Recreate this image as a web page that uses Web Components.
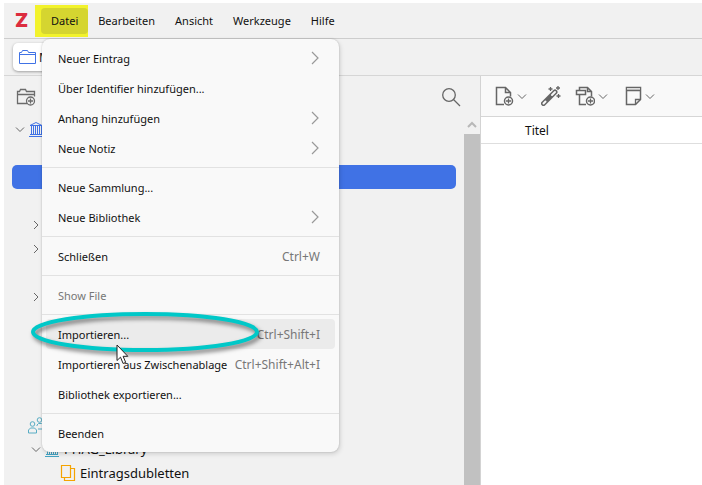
<!DOCTYPE html>
<html lang="de">
<head>
<meta charset="utf-8">
<title>Zotero</title>
<style>
  body {
    margin: 0;
    background: #fff;
    color: #111;
    font-family: "Noto Sans", "Open Sans", sans-serif;
    font-size: 11px;
  }
</style>
</head>
<body>

<app-window>
  <menu-bar slot="menubar">
    <menu-entry label="Datei" open marked>
      <popup-menu>
        <menu-row label="Neuer Eintrag" submenu></menu-row>
        <menu-row label="Über Identifier hinzufügen..."></menu-row>
        <menu-row label="Anhang hinzufügen" submenu></menu-row>
        <menu-row label="Neue Notiz" submenu></menu-row>
        <hr>
        <menu-row label="Neue Sammlung..."></menu-row>
        <menu-row label="Neue Bibliothek" submenu></menu-row>
        <hr>
        <menu-row label="Schließen" keys="Ctrl+W"></menu-row>
        <hr>
        <menu-row label="Show File" disabled></menu-row>
        <hr>
        <menu-row label="Importieren..." keys="Ctrl+Shift+I" active marked></menu-row>
        <menu-row label="Importieren aus Zwischenablage" keys="Ctrl+Shift+Alt+I"></menu-row>
        <menu-row label="Bibliothek exportieren..."></menu-row>
        <hr>
        <menu-row label="Beenden"></menu-row>
      </popup-menu>
    </menu-entry>
    <menu-entry label="Bearbeiten"></menu-entry>
    <menu-entry label="Ansicht"></menu-entry>
    <menu-entry label="Werkzeuge"></menu-entry>
    <menu-entry label="Hilfe"></menu-entry>
  </menu-bar>

  <tab-strip slot="tabs">M</tab-strip>

  <collection-pane slot="sidebar">
    <tree-row icon="library" twisty="down"></tree-row>
    <tree-row></tree-row>
    <tree-row selected></tree-row>
    <tree-row></tree-row>
    <tree-row level="1" twisty="right"></tree-row>
    <tree-row level="1" twisty="right"></tree-row>
    <tree-row></tree-row>
    <tree-row level="1" twisty="right"></tree-row>
    <tree-row></tree-row>
    <tree-row></tree-row>
    <tree-row></tree-row>
    <tree-row></tree-row>
    <tree-row icon="groups" spaced></tree-row>
    <tree-row level="1" icon="group-library" twisty="down">PHAG_Library</tree-row>
    <tree-row level="2" icon="duplicates">Eintragsdubletten</tree-row>
  </collection-pane>

  <items-pane slot="items"></items-pane>
</app-window>

<script>
// ===== Icons =====

const ICONS = {
  folder: [17, 16, `<path d="M.5 14.500V3.500h2l1-2h5l1 2h7v11zM.5 5.500h16" stroke="#4072e5"/>`],
  'folder-add': [20, 19, `<path d="M11 16.500H1.500V4.500h2l1-2h5l1 2h8v5M1.500 7.500h17" stroke="#6b6b6b" stroke-width="1.300"/>
    <circle cx="14.500" cy="14" r="4" stroke="#6b6b6b" stroke-width="1.300"/><path d="M12 14h5M14.500 11.500v5" stroke="#6b6b6b" stroke-width="1.300"/>`],
  library: [16, 16, `<path d="M2 4.500 8 1.500l6 3zM3.500 5v8M5.500 5v8M7.500 5v8M9.500 5v8M11.500 5v8M13.500 5v8M2 13.500h12M1 15.500h14" stroke="#4072e5"/>`],
  'group-library': [16, 16, `<path d="M2 4.500 8 1.500l6 3zM3.500 5v8M5.500 5v8M7.500 5v8M9.500 5v8M11.500 5v8M13.500 5v8M2 13.500h12M1 15.500h14" stroke="#45a5c4"/>`],
  groups: [16, 17, `<g stroke="#59adc4"><circle cx="4.500" cy="7" r="2.300"/><path d="M.5 16v-3l2-2h4l2 2v3z"/>
    <circle cx="11.500" cy="3" r="2.300"/><path d="M9 9V8l1.500-1.500h3L15.500 8v4H10"/></g>`],
  duplicates: [16, 16, `<path d="M1.500.5h9v12h-9zM11 3.500h3.500v12h-10V13" stroke="#f5a300" stroke-width="1.200"/>`],
  search: [20, 20, `<circle cx="8" cy="8" r="6.300" stroke="#666" stroke-width="1.300"/><path d="M12.500 12.500 19 19" stroke="#666" stroke-width="1.300"/>`],
  'twisty-down': [10, 10, `<path d="M1 3.500 5 7.500l4-4" stroke="#666"/>`],
  'twisty-right': [10, 10, `<path d="M3 1l4 4-4 4" stroke="#666"/>`],
  submenu: [9, 14, `<path d="M1 1l6 6-6 6" stroke="#999" stroke-width="1.200"/>`],
  up: [10, 8, `<path d="M1 6l4-4 4 4" stroke="#b8b8b8" stroke-width="2"/>`],
  'item-add': [20, 20, `<path d="M10 18.500H2.500v-17h9l5 5v4M11.500 1.500v5h5" stroke="#666" stroke-width="1.500"/>
    <circle cx="14.500" cy="15" r="4" stroke="#666" stroke-width="1.500"/><path d="M12 15h5M14.500 12.500v5" stroke="#666" stroke-width="1.300"/>`],
  wand: [20, 20, `<path d="M2.500 17.500 14 6" stroke="#666" stroke-width="5" stroke-linecap="round"/>
    <path d="M2.500 17.500l2-2M11 9l3-3" stroke="#f9f9f9" stroke-width="2" stroke-linecap="round"/>
    <path d="M9.500 1v4M7.500 3h4M17 0v4M15 2h4M17.500 8v4M15.500 10h4" stroke="#666" stroke-width="1.300"/>`],
  'attach-add': [20, 20, `<path d="M11 18.500H4.500V8.500M4.500 4V1.500h8l4 4v5M12.500 1.500v4h4" stroke="#666" stroke-width="1.500"/>
    <path d="M1.500 4.500h9v4h-9z" stroke="#666" stroke-width="1.500"/>
    <circle cx="15.500" cy="15" r="4" stroke="#666" stroke-width="1.500"/><path d="M13 15h5M15.500 12.500v5" stroke="#666" stroke-width="1.300"/>`],
  note: [20, 20, `<path d="M4.500 1.500h14v12l-5 5h-9z" stroke="#666" stroke-width="1.500"/><path d="M5 3h13" stroke="#ddd" stroke-width="2"/>
    <path d="M4.500 4.500h14M13.500 18.500v-5h5" stroke="#666" stroke-width="1.300"/>`]
};

class UiIcon extends HTMLElement {
  connectedCallback() {
    const [width, height, body] = ICONS[this.getAttribute('name')];
    this.attachShadow({ mode: 'open' }).innerHTML = `
      <style>
        :host { display: inline-flex; flex: none; }
        svg { display: block; }
      </style>
      <svg width="${width}" height="${height}" viewBox="0 0 ${width} ${height}" fill="none" aria-hidden="true">${body}</svg>
    `;
  }
}

// ===== Window frame =====

class AppWindow extends HTMLElement {
  connectedCallback() {
    this.attachShadow({ mode: 'open' }).innerHTML = `
      <style>
        :host {
          display: flex;
          flex-direction: column;
          box-sizing: border-box;
          min-height: 100vh;
          padding: 3px 0 0 4px;
        }
        .chrome { background: #f1f1f1; }
        .panes {
          flex: 1;
          display: grid;
          grid-template-columns: minmax(360px, 477px) minmax(0, 1fr);
        }
      </style>
      <header class="chrome">
        <slot name="menubar"></slot>
        <slot name="tabs"></slot>
      </header>
      <main class="panes">
        <slot name="sidebar"></slot>
        <slot name="items"></slot>
      </main>
    `;
  }
}

// ===== Menu bar =====

class MenuBar extends HTMLElement {
  connectedCallback() {
    this.attachShadow({ mode: 'open' }).innerHTML = `
      <style>
        :host {
          display: flex;
          align-items: center;
          height: 35px;
          border-bottom: 1px solid #cdcdcd;
        }
        .logo {
          width: 20px;
          padding-left: 11px;
          color: #dc2c3e;
          font: 900 19px/20px Inter, "Noto Sans", sans-serif;
        }
        nav { display: flex; align-items: center; }
      </style>
      <span class="logo">Z</span>
      <nav aria-label="Hauptmenü"><slot></slot></nav>
    `;
  }
}

class MenuEntry extends HTMLElement {
  connectedCallback() {
    this.attachShadow({ mode: 'open' }).innerHTML = `
      <style>
        :host { display: block; position: relative; }
        :host([marked]) { padding: 3px 0 3px 6px; background: #f2f22c; }
        button {
          display: block;
          height: 26px;
          padding: 0 10px;
          border: 0;
          border-radius: 4px;
          background: none;
          color: inherit;
          font: inherit;
        }
        :host([open]) button { background: #d5d530; }
        .popup {
          position: absolute;
          z-index: 2;
          top: 100%;
          left: 7px;
          margin-top: 2px;
        }
      </style>
      <button type="button">${this.getAttribute('label')}</button>
      ${this.hasAttribute('open') ? '<div class="popup"><slot></slot></div>' : ''}
    `;
  }
}

class PopupMenu extends HTMLElement {
  connectedCallback() {
    this.attachShadow({ mode: 'open' }).innerHTML = `
      <style>
        :host {
          display: block;
          min-width: 297px;
          padding: 4px 0;
          box-sizing: border-box;
          border-radius: 8px;
          background: #f9f9f9;
          box-shadow: 0 0 2px rgba(0, 0, 0, .2), 1px 2px 5px rgba(0, 0, 0, .14);
        }
        ::slotted(hr) {
          height: 1px;
          margin: 4px 0;
          border: 0;
          background: #e2e2e2;
        }
      </style>
      <slot></slot>
    `;
  }
}

class MenuRow extends HTMLElement {
  connectedCallback() {
    const keys = this.getAttribute('keys');
    this.attachShadow({ mode: 'open' }).innerHTML = `
      <style>
        :host { display: block; position: relative; padding: 0 4px; }
        button {
          display: flex;
          align-items: center;
          justify-content: space-between;
          gap: 6px;
          width: 100%;
          height: 30px;
          padding: 1px 15px 0 12px;
          border: 0;
          border-radius: 4px;
          background: none;
          color: inherit;
          font: inherit;
          white-space: nowrap;
        }
        button:disabled { color: #777; }
        :host([active]) button { background: #ebebeb; }
        kbd { color: #777; font: inherit; font-size: 12px; }
        .ring {
          position: absolute;
          z-index: 1;
          left: -13px;
          top: -10px;
          filter: drop-shadow(2px 3px 2px rgba(0, 0, 0, .5));
        }
        .pointer { position: absolute; z-index: 2; left: 74px; top: 25px; }
      </style>
      <button type="button" ${this.hasAttribute('disabled') ? 'disabled' : ''}>
        <span>${this.getAttribute('label')}</span>
        ${keys ? `<kbd>${keys}</kbd>` : ''}
        ${this.hasAttribute('submenu') ? '<ui-icon name="submenu"></ui-icon>' : ''}
      </button>
      ${this.hasAttribute('marked') ? `
        <svg class="ring" width="232" height="44" viewBox="0 0 232 44" fill="none" aria-hidden="true">
          <ellipse cx="116" cy="23" rx="112" ry="18" stroke="#00c8c8" stroke-width="4"/>
        </svg>
        <svg class="pointer" width="14" height="21" viewBox="0 0 14 21" aria-hidden="true">
          <path d="M1 1v15.500l3.500-3.300 2.600 6.300 2.600-1.100-2.600-6.100h4.700z" fill="#fff" stroke="#222"/>
        </svg>` : ''}
    `;
  }
}

// ===== Tabs =====

class TabStrip extends HTMLElement {
  connectedCallback() {
    this.attachShadow({ mode: 'open' }).innerHTML = `
      <style>
        :host {
          display: flex;
          align-items: center;
          height: 36px;
          padding-left: 9px;
          border-bottom: 1px solid #d6d6d6;
        }
        button {
          display: flex;
          align-items: center;
          gap: 3px;
          height: 28px;
          min-width: 120px;
          padding: 0 8px 0 6px;
          border: 0;
          border-radius: 5px;
          background: #fff;
          box-shadow: 0 1px 3px rgba(0, 0, 0, .35);
          color: inherit;
          font: inherit;
          font-size: 12px;
        }
      </style>
      <button type="button"><ui-icon name="folder"></ui-icon><slot></slot></button>
    `;
  }
}

// ===== Collections =====

class CollectionPane extends HTMLElement {
  connectedCallback() {
    this.attachShadow({ mode: 'open' }).innerHTML = `
      <style>
        :host {
          display: flex;
          flex-direction: column;
          border-right: 1px solid #d3d3d3;
          background: #f1f1f1;
        }
        .tools {
          display: flex;
          align-items: center;
          justify-content: space-between;
          height: 41px;
          padding: 0 19px 0 12px;
        }
        .tools button { display: flex; padding: 0; border: 0; background: none; }
        .body { flex: 1; display: flex; }
        .tree { flex: 1; }
        .scrollbar {
          display: flex;
          flex-direction: column;
          width: 16px;
        }
        .scrollbar ui-icon { justify-content: center; padding: 4px 0 5px; }
        .thumb { flex: 1; background: #c1c1c1; }
      </style>
      <div class="tools">
        <button type="button" aria-label="Neue Sammlung"><ui-icon name="folder-add"></ui-icon></button>
        <button type="button" aria-label="Suchen"><ui-icon name="search"></ui-icon></button>
      </div>
      <div class="body">
        <div class="tree"><slot></slot></div>
        <div class="scrollbar">
          <ui-icon name="up"></ui-icon>
          <div class="thumb"></div>
        </div>
      </div>
    `;
  }
}

class TreeRow extends HTMLElement {
  connectedCallback() {
    const twisty = this.getAttribute('twisty');
    const icon = this.getAttribute('icon');
    this.attachShadow({ mode: 'open' }).innerHTML = `
      <style>
        :host {
          display: flex;
          align-items: center;
          height: 24px;
          margin: 0 8px;
          border-radius: 5px;
          font-size: 13px;
        }
        :host([selected]) { background: #4072e5; }
        :host([spaced]) { margin-top: 8px; }
        :host([level="1"]) { padding-left: 16px; }
        :host([level="2"]) { padding-left: 32px; }
        .twisty { display: flex; justify-content: center; width: 16px; }
        .label { padding-left: 4px; }
      </style>
      <span class="twisty">${twisty ? `<ui-icon name="twisty-${twisty}"></ui-icon>` : ''}</span>
      ${icon ? `<ui-icon name="${icon}"></ui-icon>` : ''}
      <span class="label"><slot></slot></span>
    `;
  }
}

// ===== Items =====

class ItemsPane extends HTMLElement {
  connectedCallback() {
    this.attachShadow({ mode: 'open' }).innerHTML = `
      <style>
        :host { display: block; background: #fff; }
        .tools {
          display: flex;
          align-items: center;
          gap: 14px;
          height: 40px;
          padding-left: 13px;
          border-bottom: 1px solid #d6d6d6;
          background: #f9f9f9;
        }
        .tools button {
          display: flex;
          align-items: center;
          gap: 3px;
          padding: 0;
          border: 0;
          background: none;
        }
        table { width: 100%; border-collapse: collapse; }
        th {
          height: 26px;
          padding: 0 0 0 44px;
          border-bottom: 1px solid #dedede;
          font-size: 12px;
          font-weight: 400;
          text-align: left;
        }
      </style>
      <div class="tools">
        <button type="button" aria-label="Neuer Eintrag"><ui-icon name="item-add"></ui-icon><ui-icon name="twisty-down"></ui-icon></button>
        <button type="button" aria-label="Über Identifier hinzufügen"><ui-icon name="wand"></ui-icon></button>
        <button type="button" aria-label="Anhang hinzufügen"><ui-icon name="attach-add"></ui-icon><ui-icon name="twisty-down"></ui-icon></button>
        <button type="button" aria-label="Neue Notiz"><ui-icon name="note"></ui-icon><ui-icon name="twisty-down"></ui-icon></button>
      </div>
      <table>
        <thead><tr><th scope="col">Titel</th></tr></thead>
      </table>
    `;
  }
}

customElements.define('ui-icon', UiIcon);
customElements.define('app-window', AppWindow);
customElements.define('menu-bar', MenuBar);
customElements.define('menu-entry', MenuEntry);
customElements.define('popup-menu', PopupMenu);
customElements.define('menu-row', MenuRow);
customElements.define('tab-strip', TabStrip);
customElements.define('collection-pane', CollectionPane);
customElements.define('tree-row', TreeRow);
customElements.define('items-pane', ItemsPane);
</script>
</body>
</html>
